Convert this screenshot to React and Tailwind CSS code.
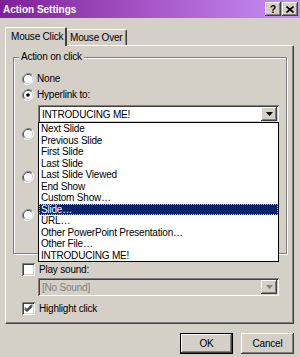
import React from "react";

const raised =
  "shadow-[inset_-1px_-1px_#404040,inset_1px_1px_#ffffff,inset_-2px_-2px_#808080,inset_2px_2px_#d4d0c8]";
const sunken =
  "shadow-[inset_1px_1px_#808080,inset_-1px_-1px_#ffffff,inset_2px_2px_#404040,inset_-2px_-2px_#d4d0c8]";

const items = [
  "Next Slide",
  "Previous Slide",
  "First Slide",
  "Last Slide",
  "Last Slide Viewed",
  "End Show",
  "Custom Show…",
  "Slide…",
  "URL…",
  "Other PowerPoint Presentation…",
  "Other File…",
  "INTRODUCING ME!",
];

function Radio({ checked }) {
  return (
    <svg width="12" height="12" viewBox="0 0 12 12" className="shrink-0">
      <path d="M10.2 1.8A6 6 0 0 0 1.8 10.2" fill="none" stroke="#808080" strokeWidth="1" transform="translate(0 0)" />
      <circle cx="6" cy="6" r="5.5" fill="none" stroke="#ffffff" strokeDasharray="0" opacity="0" />
      <path d="M1.8 10.2A6 6 0 0 0 10.2 1.8" fill="none" stroke="#ffffff" />
      <path d="M9.5 2.5A5 5 0 0 0 2.5 9.5" fill="none" stroke="#404040" />
      <path d="M2.5 9.5A5 5 0 0 0 9.5 2.5" fill="none" stroke="#d4d0c8" />
      <circle cx="6" cy="6" r="4" fill="#ffffff" />
      {checked && <circle cx="6" cy="6" r="1.8" fill="#000000" />}
    </svg>
  );
}

function Check({ checked }) {
  return (
    <div className={`w-[13px] h-[13px] bg-white shrink-0 relative ${sunken}`}>
      {checked && (
        <svg width="13" height="13" viewBox="0 0 13 13" className="absolute left-0 top-0">
          <path d="M3 5.5 L5 7.5 L10 2.5 M3 6.5 L5 8.5 L10 3.5 M3 7.5 L5 9.5 L10 4.5" stroke="#000" strokeWidth="1" fill="none" />
        </svg>
      )}
    </div>
  );
}

function Arrow({ color = "#000" }) {
  return (
    <svg width="7" height="4" viewBox="0 0 7 4">
      <path d="M0 0h7L3.5 4z" fill={color} />
    </svg>
  );
}

function Combo({ text, disabled }) {
  return (
    <div className={`h-[18px] flex items-center ${disabled ? "bg-[#d4d0c8]" : "bg-white"} ${sunken} pl-[2px] pr-[2px]`}>
      <span className={`flex-1 pl-[2px] ${disabled ? "text-[#808080]" : "text-black"}`}>{text}</span>
      <div className={`w-[16px] h-[14px] flex items-center justify-center bg-[#d4d0c8] ${raised}`}>
        <Arrow color={disabled ? "#808080" : "#000"} />
      </div>
    </div>
  );
}

export default function App() {
  return (
    <div className="w-[300px] h-[357px] bg-[#d4d0c8] font-['Liberation_Sans',Arial,sans-serif] text-[10px] tracking-[-0.2px] text-black overflow-hidden relative">
      {/* title bar */}
      <div className="h-[18px] flex items-center pl-[3px] pr-[2px] bg-gradient-to-r from-[#7e1e98] via-[#a656c8] to-[#c890f4]">
        <span className="flex-1 font-bold text-white text-[10px] tracking-normal">Action Settings</span>
        <div className="flex gap-[1px]">
          <div className={`w-[16px] h-[14px] bg-[#d4d0c8] flex items-center justify-center font-bold text-[10px] ${raised}`}>?</div>
          <div className={`w-[16px] h-[14px] bg-[#d4d0c8] flex items-center justify-center ${raised}`}>
            <svg width="8" height="7" viewBox="0 0 8 7">
              <path d="M0.5 0.5L7.5 6.5M7.5 0.5L0.5 6.5" stroke="#000" strokeWidth="1.6" />
            </svg>
          </div>
        </div>
      </div>

      {/* tabs */}
      <div className="flex items-end pl-[5px] mt-[9px] h-[19px] relative z-10">
        <div className="w-[62px] h-[19px] border-t border-l border-white border-r-2 border-r-[#404040] rounded-t-[2px] bg-[#d4d0c8] flex items-center pl-[5px] pb-[1px]">
          Mouse Click
        </div>
        <div className="w-[60px] h-[16px] border-t border-white border-r border-r-[#404040] shadow-[inset_-1px_0_#808080] rounded-t-[2px] flex items-center pl-[3px] mb-[1px]">
          Mouse Over
        </div>
      </div>

      {/* panel */}
      <div className="ml-[5px] w-[289px] h-[279px] -mt-[1px] border-t border-l border-white border-r border-b border-r-[#404040] border-b-[#404040] shadow-[inset_-1px_-1px_#808080] px-[7px] pt-[11px]">
        {/* group box */}
        <div className="w-[274px] h-[197px] border border-[#808080] shadow-[1px_1px_#ffffff,inset_1px_1px_#ffffff] relative px-[8px]">
          <div className="absolute -top-[7px] left-[5px] bg-[#d4d0c8] px-[2px] leading-[12px]">Action on click</div>
          <div className="flex items-center gap-[3px] mt-[14px] h-[13px]">
            <Radio />
            <span>None</span>
          </div>
          <div className="flex items-center gap-[3px] mt-[3px] h-[13px]">
            <Radio checked />
            <span>Hyperlink to:</span>
          </div>
          <div className="ml-[16px] mt-[4px] w-[241px]">
            <Combo text="INTRODUCING ME!" />
          </div>
          <div className="mt-[4px] h-[13px] flex items-center"><Radio /></div>
          <div className="mt-[30px] h-[13px] flex items-center"><Radio /></div>
          <div className="mt-[25px] h-[13px] flex items-center"><Radio /></div>
        </div>

        <div className="flex items-center gap-[4px] mt-[9px] h-[13px] pl-[9px]">
          <Check />
          <span>Play sound:</span>
        </div>
        <div className="ml-[25px] mt-[2px] w-[241px]">
          <Combo text="[No Sound]" disabled />
        </div>
        <div className="flex items-center gap-[4px] mt-[6px] h-[13px] pl-[9px]">
          <Check checked />
          <span>Highlight click</span>
        </div>
      </div>

      {/* dropdown list overlay */}
      <div className="absolute left-[38px] top-[122px] w-[241px] bg-white border border-black py-0 z-20">
        {items.map((it) => (
          <div
            key={it}
            className={`h-[11.5px] leading-[11.5px] pl-[2px] ${
              it === "Slide…" ? "bg-[#0a246a] text-white outline outline-1 outline-dotted outline-[#c0c0c0] -outline-offset-1" : ""
            }`}
          >
            {it}
          </div>
        ))}
      </div>

      {/* buttons */}
      <div className="flex justify-end gap-[8px] pr-[6px] mt-[9px]">
        <div className="w-[53px] h-[21px] border border-black">
          <div className={`w-full h-full flex items-center justify-center ${raised}`}>OK</div>
        </div>
        <div className={`w-[53px] h-[21px] flex items-center justify-center ${raised}`}>Cancel</div>
      </div>
    </div>
  );
}
